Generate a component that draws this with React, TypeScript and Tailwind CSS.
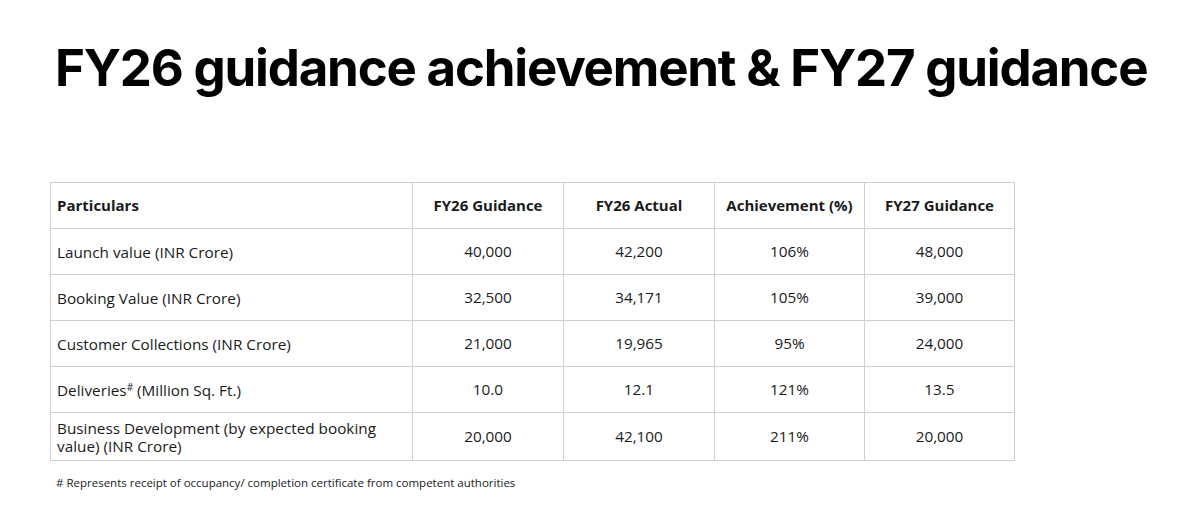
import React from "react";

const rows = [
  { label: "Launch value (INR Crore)", g: "40,000", a: "42,200", p: "106%", n: "48,000" },
  { label: "Booking Value (INR Crore)", g: "32,500", a: "34,171", p: "105%", n: "39,000" },
  { label: "Customer Collections (INR Crore)", g: "21,000", a: "19,965", p: "95%", n: "24,000" },
  { label: "Deliveries", sup: "#", rest: " (Million Sq. Ft.)", g: "10.0", a: "12.1", p: "121%", n: "13.5" },
  { label: "Business Development (by expected booking value) (INR Crore)", g: "20,000", a: "42,100", p: "211%", n: "20,000" },
];

export default function App() {
  return (
    <div className="w-[1200px] h-[522px] bg-white text-black overflow-hidden">
      <h1 className="pl-[55px] pt-[38px] text-[51px] leading-[60px] font-bold tracking-[-1.2px] font-['Inter',sans-serif]">
        FY26 guidance achievement &amp; FY27 guidance
      </h1>

      <div className="ml-[50px] mt-[84px] font-['Open_Sans',sans-serif] text-[15px] text-[#1a1a1a]">
        <table className="border-collapse">
          <thead>
            <tr className="h-[46px]">
              <th className="w-[362px] border border-[#cfcfcf] px-[6px] text-left font-bold">Particulars</th>
              <th className="w-[151px] border border-[#cfcfcf] text-center font-bold">FY26 Guidance</th>
              <th className="w-[151px] border border-[#cfcfcf] text-center font-bold">FY26 Actual</th>
              <th className="w-[150px] border border-[#cfcfcf] text-center font-bold">Achievement (%)</th>
              <th className="w-[150px] border border-[#cfcfcf] text-center font-bold">FY27 Guidance</th>
            </tr>
          </thead>
          <tbody className="text-[15.3px]">
            {rows.map((r, i) => (
              <tr key={i} className={i === 4 ? "h-[48px]" : "h-[46px]"}>
                <td className="border border-[#cfcfcf] px-[6px] leading-[18px]">
                  {r.sup ? (
                    <>
                      {r.label}
                      <sup className="text-[10px]">{r.sup}</sup>
                      {r.rest}
                    </>
                  ) : (
                    <span className={i === 4 ? "block w-[330px]" : ""}>{r.label}</span>
                  )}
                </td>
                <td className="border border-[#cfcfcf] text-center">{r.g}</td>
                <td className="border border-[#cfcfcf] text-center">{r.a}</td>
                <td className="border border-[#cfcfcf] text-center">{r.p}</td>
                <td className="border border-[#cfcfcf] text-center">{r.n}</td>
              </tr>
            ))}
          </tbody>
        </table>
        <p className="mt-[13px] pl-[6px] text-[11.5px]">
          # Represents receipt of occupancy/ completion certificate from competent authorities
        </p>
      </div>
    </div>
  );
}
